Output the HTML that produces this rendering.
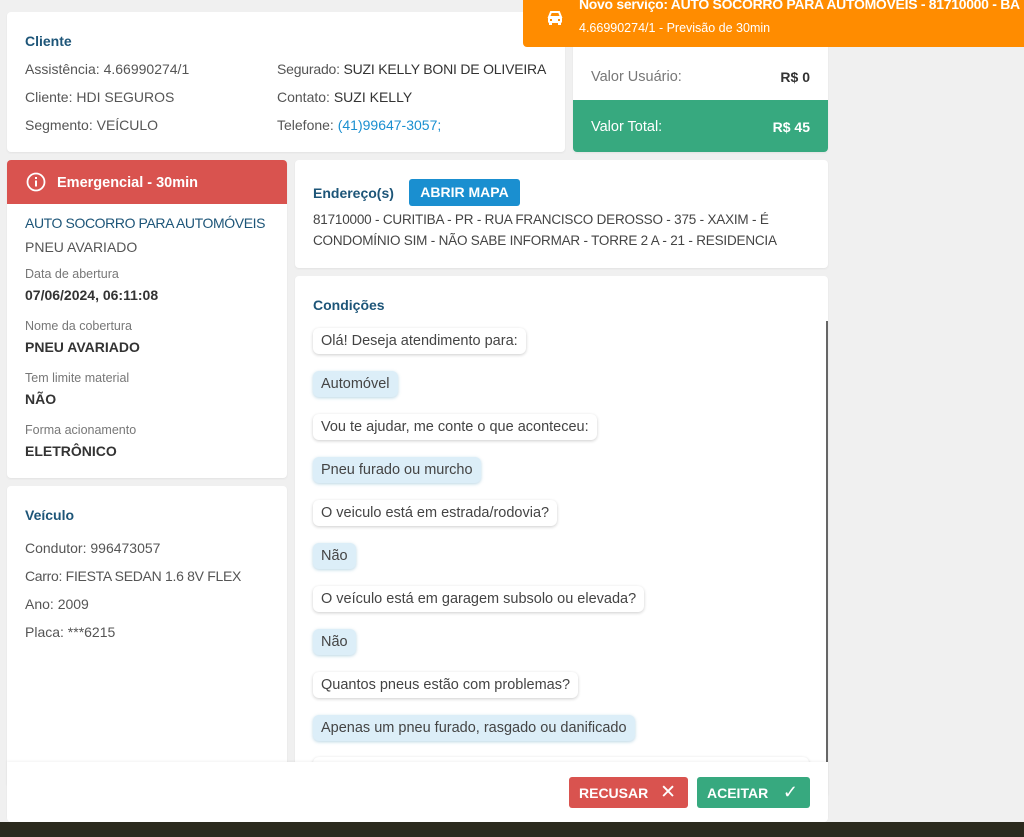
<!DOCTYPE html>
<html><head><meta charset="utf-8"><style>
*{box-sizing:border-box;margin:0;padding:0}
body{width:1024px;height:837px;background:#f0f0f0;font-family:"Liberation Sans",sans-serif;color:#555;font-size:14px;position:relative;overflow:hidden}
.card{position:absolute;background:#fff;border-radius:4px;box-shadow:0 1px 2px rgba(0,0,0,.06)}
.t{position:absolute;white-space:nowrap}
.h{color:#1d5578;font-weight:bold;font-size:14px}
.lbl{font-size:12.5px;color:#777}
.val{font-weight:bold;color:#333;font-size:14px}
.b{position:absolute;left:18px;height:26px;padding:0 8px;line-height:26px;border-radius:6px;background:#fff;box-shadow:0 1px 3px rgba(0,0,0,.2);white-space:nowrap;color:#444;font-size:14.5px}
.b.a{background:#dceef8;box-shadow:0 1px 3px rgba(60,140,180,.35)}
</style></head><body>
<div class="card" style="left:7px;top:12px;width:558px;height:140px">
<div class="t h" style="left:18px;top:21px">Cliente</div>
<div class="t" style="left:18px;top:49px">Assistência: 4.66990274/1</div>
<div class="t" style="left:18px;top:77px">Cliente: HDI SEGUROS</div>
<div class="t" style="left:18px;top:105px">Segmento: VEÍCULO</div>
<div class="t" style="left:270px;top:49px;letter-spacing:-0.2px">Segurado: <span style="color:#333">SUZI KELLY BONI DE OLIVEIRA</span></div>
<div class="t" style="left:270px;top:77px">Contato: <span style="color:#333">SUZI KELLY</span></div>
<div class="t" style="left:270px;top:105px">Telefone: <span style="color:#1a8fd0">(41)99647-3057;</span></div>
</div>
<div class="card" style="left:573px;top:12px;width:255px;height:140px;overflow:hidden">
<div class="t" style="left:18px;top:57px;color:#777;font-size:14.5px">Valor Usuário:</div>
<div class="t" style="right:18px;top:57px;font-weight:bold;color:#333">R$ 0</div>
<div style="position:absolute;left:0;top:88px;width:255px;height:52px;background:#37a97f"></div>
<div class="t" style="left:18px;top:107px;color:#fff;font-size:14.5px">Valor Total:</div>
<div class="t" style="right:18px;top:107px;font-weight:bold;color:#fff">R$ 45</div>
</div>
<div style="position:absolute;left:523px;top:0;width:501px;height:47px;background:#ff8c00;border-radius:0 0 0 4px;color:#fff;overflow:hidden">
<svg style="position:absolute;left:22px;top:8px" width="20" height="20" viewBox="0 0 20 20"><path d="M4 9 L6 4 H14 L16 9 Z" fill="none" stroke="#fff" stroke-width="2"/><rect x="3" y="9" width="14" height="6" rx="1.5" fill="#fff"/><rect x="5" y="11" width="2" height="2" fill="#ff8c00"/><rect x="13" y="11" width="2" height="2" fill="#ff8c00"/><rect x="4" y="14" width="3" height="3" fill="#fff"/><rect x="13" y="14" width="3" height="3" fill="#fff"/></svg>
<div class="t" style="left:56px;top:-4px;font-weight:bold;font-size:14px;letter-spacing:-0.3px">Novo serviço: AUTO SOCORRO PARA AUTOMÓVEIS - 81710000 - BA</div>
<div class="t" style="left:56px;top:21px;font-size:12.5px">4.66990274/1 - Previsão de 30min</div>
</div>
<div class="card" style="left:7px;top:160px;width:280px;height:318px;overflow:hidden">
<div style="height:44px;background:#d9534f;color:#fff;position:relative">
<svg style="position:absolute;left:19px;top:12px" width="20" height="20" viewBox="0 0 20 20"><circle cx="10" cy="10" r="8.5" fill="none" stroke="#fff" stroke-width="1.8"/><rect x="9" y="8.5" width="2" height="6" fill="#fff"/><rect x="9" y="5" width="2" height="2" fill="#fff"/></svg>
<div class="t" style="left:50px;top:15px;font-weight:bold;font-size:14.5px">Emergencial - 30min</div></div>
<div class="t" style="left:18px;top:55px;color:#1d5578;font-size:14px;letter-spacing:-0.4px">AUTO SOCORRO PARA AUTOMÓVEIS</div>
<div class="t" style="left:18px;top:79px">PNEU AVARIADO</div>
<div class="t lbl" style="left:18px;top:107px">Data de abertura</div>
<div class="t val" style="left:18px;top:127px">07/06/2024, 06:11:08</div>
<div class="t lbl" style="left:18px;top:159px">Nome da cobertura</div>
<div class="t val" style="left:18px;top:179px">PNEU AVARIADO</div>
<div class="t lbl" style="left:18px;top:211px">Tem limite material</div>
<div class="t val" style="left:18px;top:231px">NÃO</div>
<div class="t lbl" style="left:18px;top:263px">Forma acionamento</div>
<div class="t val" style="left:18px;top:283px">ELETRÔNICO</div>
</div>
<div class="card" style="left:7px;top:486px;width:280px;height:300px">
<div class="t h" style="left:18px;top:21px">Veículo</div>
<div class="t" style="left:18px;top:54px">Condutor: 996473057</div>
<div class="t" style="left:18px;top:82px;letter-spacing:-0.3px">Carro: FIESTA SEDAN 1.6 8V FLEX</div>
<div class="t" style="left:18px;top:110px">Ano: 2009</div>
<div class="t" style="left:18px;top:138px">Placa: ***6215</div>
</div>
<div class="card" style="left:295px;top:160px;width:533px;height:108px">
<div class="t h" style="left:18px;top:25px">Endereço(s)</div>
<div style="position:absolute;left:114px;top:19px;width:111px;height:27px;background:#1a8fd0;border-radius:3px;color:#fff;font-weight:bold;font-size:14px;text-align:center;line-height:27px">ABRIR MAPA</div>
<div class="t" style="left:18px;top:52px;color:#444;font-size:13.5px;letter-spacing:-0.2px">81710000 - CURITIBA - PR - RUA FRANCISCO DEROSSO - 375 - XAXIM - É</div>
<div class="t" style="left:18px;top:73px;color:#444;font-size:13.5px;letter-spacing:-0.2px">CONDOMÍNIO SIM - NÃO SABE INFORMAR - TORRE 2 A - 21 - RESIDENCIA</div>
</div>
<div class="card" style="left:295px;top:276px;width:533px;height:520px;overflow:hidden">
<div class="t h" style="left:18px;top:21px">Condições</div>
<div style="position:absolute;left:531px;top:45px;width:2px;height:480px;background:#666"></div>
<div class="b" style="top:52px">Olá! Deseja atendimento para:</div>
<div class="b a" style="top:95px">Automóvel</div>
<div class="b" style="top:138px">Vou te ajudar, me conte o que aconteceu:</div>
<div class="b a" style="top:181px">Pneu furado ou murcho</div>
<div class="b" style="top:224px">O veiculo está em estrada/rodovia?</div>
<div class="b a" style="top:267px">Não</div>
<div class="b" style="top:310px">O veículo está em garagem subsolo ou elevada?</div>
<div class="b a" style="top:353px">Não</div>
<div class="b" style="top:396px">Quantos pneus estão com problemas?</div>
<div class="b a" style="top:439px">Apenas um pneu furado, rasgado ou danificado</div>
<div class="b" style="top:481px;width:496px">&nbsp;</div>
</div>
<div style="position:absolute;left:7px;top:762px;width:821px;height:60px;background:#fff;border-radius:0 0 4px 4px;box-shadow:0 -1px 2px rgba(0,0,0,.05)">
<div style="position:absolute;left:562px;top:15px;width:119px;height:31px;background:#d9534f;border-radius:3px;color:#fff;font-weight:bold;font-size:14px;line-height:33px;padding-left:10px">RECUSAR <span style="font-weight:normal;font-size:19px;position:absolute;right:12px;top:0;line-height:31px">✕</span></div>
<div style="position:absolute;left:690px;top:15px;width:113px;height:31px;background:#37a97f;border-radius:3px;color:#fff;font-weight:bold;font-size:14px;line-height:33px;padding-left:10px">ACEITAR <span style="font-weight:normal;font-size:18px;position:absolute;right:12px;top:0;line-height:31px">✓</span></div>
</div>
<div style="position:absolute;left:0;top:822px;width:1024px;height:15px;background:#2b2a1e"></div>
</body></html>
